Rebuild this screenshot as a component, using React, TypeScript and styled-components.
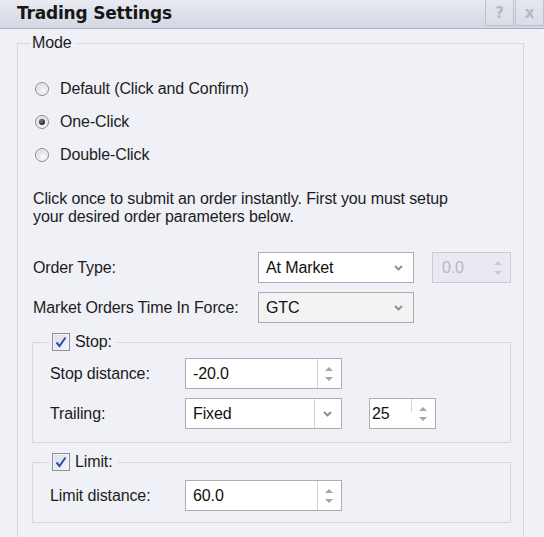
import React from 'react';
import styled, { createGlobalStyle } from 'styled-components';

const GlobalStyle = createGlobalStyle`
  html, body {
    margin: 0;
    padding: 0;
    background: #f0f0f7;
  }
  body {
    font-family: "Liberation Sans", Arial, sans-serif;
    font-size: 16px;
    color: #1c1c1c;
  }
`;

const Window = styled.div`
  width: 544px;
  height: 537px;
  overflow: hidden;
  display: flex;
  flex-direction: column;
  background: #f0f0f7;
`;

const TitleBar = styled.div`
  height: 28px;
  flex: none;
  display: flex;
  justify-content: space-between;
  align-items: flex-start;
  padding-left: 17px;
  background: linear-gradient(#e9ebf2, #d2d7e3);
  border-bottom: 1px solid #a9b0c0;
`;

const Title = styled.div`
  font-family: "DejaVu Sans", Verdana, sans-serif;
  font-weight: bold;
  font-size: 17px;
  line-height: 26px;
  color: #161616;
  letter-spacing: -0.2px;
`;

const TitleButtons = styled.div`
  display: flex;
  gap: 1px;
`;

const TitleButton = styled.div`
  width: 27px;
  height: 25px;
  display: grid;
  place-items: center;
  border: 1px solid #bcc1cd;
  border-top: none;
  background: linear-gradient(#e4e7ee, #d9dde7);
  color: #b3b8c5;
  font-family: "DejaVu Sans", Verdana, sans-serif;
  font-weight: bold;
  font-size: 15px;
`;

const Body = styled.div`
  flex: 1;
  padding: 5px 20px 0 17px;
`;

const Group = styled.fieldset<{ $mt?: number; $ml?: number }>`
  margin: ${(p) => p.$mt ?? 0}px 0 0 ${(p) => p.$ml ?? 0}px;
  padding: 0;
  min-width: 0;
  border: 1px solid #d6d6de;
`;

const Legend = styled.legend<{ $offset: number }>`
  margin-left: ${(p) => p.$offset}px;
  padding: 0 5px 0 2px;
  display: flex;
  align-items: center;
  gap: 5px;
  line-height: 18px;
  letter-spacing: -0.12px;
`;

const GroupBody = styled.div<{ $pad: string }>`
  padding: ${(p) => p.$pad};
`;

const RadioList = styled.div`
  display: flex;
  flex-direction: column;
  margin-left: 2px;
`;

const RadioRow = styled.label`
  height: 33px;
  display: flex;
  align-items: center;
  gap: 11px;
  letter-spacing: -0.12px;
`;

const RadioDot = styled.span<{ $checked?: boolean }>`
  position: relative;
  width: 12px;
  height: 12px;
  border-radius: 50%;
  border: 1px solid #8b8b8b;
  background: radial-gradient(circle at 60% 65%, #fafafa 0%, #e6e6e6 45%, #c9c9c9 100%);
  box-shadow: inset 0 0 0 1px #f4f4f4;
  &::after {
    content: '';
    display: ${(p) => (p.$checked ? 'block' : 'none')};
    position: absolute;
    left: 3px;
    top: 3px;
    width: 6px;
    height: 6px;
    border-radius: 50%;
    background: radial-gradient(circle at 40% 35%, #6f7a86, #1d2228 75%);
  }
`;

const Description = styled.p`
  margin: 19px 0 0;
  line-height: 18px;
  letter-spacing: -0.12px;
  width: 440px;
`;

const FormGrid = styled.div<{ $cols: string; $mt?: number }>`
  margin-top: ${(p) => p.$mt ?? 0}px;
  display: grid;
  grid-template-columns: ${(p) => p.$cols};
  grid-auto-rows: 31px;
  row-gap: 9px;
  align-items: center;
`;

const FieldLabel = styled.span`
  letter-spacing: -0.12px;
  white-space: nowrap;
`;

const Box = styled.div<{ $bg?: string; $disabled?: boolean; $ml?: number }>`
  height: 31px;
  box-sizing: border-box;
  margin-left: ${(p) => p.$ml ?? 0}px;
  display: flex;
  align-items: stretch;
  border: 1px solid ${(p) => (p.$disabled ? '#cbcbd3' : '#abadb5')};
  background: ${(p) => p.$bg ?? '#ffffff'};
  color: ${(p) => (p.$disabled ? '#b8b8c0' : '#111')};
`;

const BoxText = styled.span<{ $pl: number }>`
  flex: 1;
  display: flex;
  align-items: center;
  padding-left: ${(p) => p.$pl}px;
  letter-spacing: -0.12px;
`;

const SideCell = styled.span<{ $w: number; $sep?: 'full' | 'short' }>`
  position: relative;
  width: ${(p) => p.$w}px;
  flex: none;
  display: flex;
  flex-direction: column;
  align-items: center;
  justify-content: center;
  gap: 6px;
  &::before {
    content: '';
    display: ${(p) => (p.$sep ? 'block' : 'none')};
    position: absolute;
    left: 0;
    top: 0;
    width: 1px;
    height: ${(p) => (p.$sep === 'short' ? '45%' : '100%')};
    background: #d3d3d8;
  }
`;

const Arrow = styled.span<{ $down?: boolean; $light?: boolean }>`
  width: 0;
  height: 0;
  border-left: 4px solid transparent;
  border-right: 4px solid transparent;
  ${(p) =>
    p.$down
      ? `border-top: 4px solid ${p.$light ? '#cacad2' : '#a4a4aa'};`
      : `border-bottom: 4px solid ${p.$light ? '#cacad2' : '#a4a4aa'};`}
`;

const CheckBox = styled.span`
  width: 16px;
  height: 16px;
  flex: none;
  display: grid;
  place-items: center;
  border: 1px solid #8e8f9e;
  background: linear-gradient(135deg, #dcdde6, #f7f7fa);
  box-shadow: inset 0 0 0 1px #f3f3f6;
`;

const Chevron = () => (
  <svg width="9" height="6" viewBox="0 0 9 6">
    <polyline points="1,1 4.5,4.5 8,1" fill="none" stroke="#8a8a90" strokeWidth="1.8" />
  </svg>
);

const Tick = () => (
  <svg width="14" height="14" viewBox="0 0 14 14">
    <path d="M2.5 7.5 L5.5 11 L11.5 2.5" fill="none" stroke="#2d4fb4" strokeWidth="2" />
  </svg>
);

type ComboProps = { value: string; bg?: string; sep?: boolean; arrowW: number };

const Combo = ({ value, bg, sep, arrowW }: ComboProps) => (
  <Box $bg={bg}>
    <BoxText $pl={7}>{value}</BoxText>
    <SideCell $w={arrowW} $sep={sep ? 'full' : undefined}>
      <Chevron />
    </SideCell>
  </Box>
);

type SpinProps = {
  value: string;
  pl: number;
  sep?: 'full' | 'short';
  disabled?: boolean;
  bg?: string;
  ml?: number;
};

const Spinner = ({ value, pl, sep, disabled, bg, ml }: SpinProps) => (
  <Box $disabled={disabled} $bg={bg} $ml={ml}>
    <BoxText $pl={pl}>{value}</BoxText>
    <SideCell $w={24} $sep={sep}>
      <Arrow $light={disabled} />
      <Arrow $down $light={disabled} />
    </SideCell>
  </Box>
);

function App() {
  return (
    <Window>
      <GlobalStyle />
      <TitleBar>
        <Title>Trading Settings</Title>
        <TitleButtons>
          <TitleButton>?</TitleButton>
          <TitleButton>x</TitleButton>
        </TitleButtons>
      </TitleBar>
      <Body>
        <Group>
          <Legend $offset={12}>Mode</Legend>
          <GroupBody $pad="20px 12px 20px 15px">
            <RadioList>
              <RadioRow>
                <RadioDot />
                Default (Click and Confirm)
              </RadioRow>
              <RadioRow>
                <RadioDot $checked />
                One-Click
              </RadioRow>
              <RadioRow>
                <RadioDot />
                Double-Click
              </RadioRow>
            </RadioList>

            <Description>
              Click once to submit an order instantly. First you must setup your desired order parameters below.
            </Description>

            <FormGrid $cols="225px 156px 97px" $mt={26}>
              <FieldLabel>Order Type:</FieldLabel>
              <Combo value="At Market" arrowW={30} />
              <Spinner value="0.0" pl={9} disabled bg="#e9e9f1" ml={18} />
              <FieldLabel>Market Orders Time In Force:</FieldLabel>
              <Combo value="GTC" bg="#f3f3f4" arrowW={30} />
            </FormGrid>

            <Group $mt={10} $ml={-1}>
              <Legend $offset={17}>
                <CheckBox>
                  <Tick />
                </CheckBox>
                Stop:
              </Legend>
              <GroupBody $pad="7px 0 13px 17px">
                <FormGrid $cols="135px 157px 94px">
                  <FieldLabel>Stop distance:</FieldLabel>
                  <Spinner value="-20.0" pl={7} sep="full" />
                  <span />
                  <FieldLabel>Trailing:</FieldLabel>
                  <Combo value="Fixed" sep arrowW={27} />
                  <Spinner value="25" pl={2} sep="short" ml={27} />
                </FormGrid>
              </GroupBody>
            </Group>

            <Group $mt={10} $ml={-1}>
              <Legend $offset={17}>
                <CheckBox>
                  <Tick />
                </CheckBox>
                Limit:
              </Legend>
              <GroupBody $pad="9px 0 11px 17px">
                <FormGrid $cols="135px 157px">
                  <FieldLabel>Limit distance:</FieldLabel>
                  <Spinner value="60.0" pl={7} sep="full" />
                </FormGrid>
              </GroupBody>
            </Group>
          </GroupBody>
        </Group>
      </Body>
    </Window>
  );
}

export default App;
